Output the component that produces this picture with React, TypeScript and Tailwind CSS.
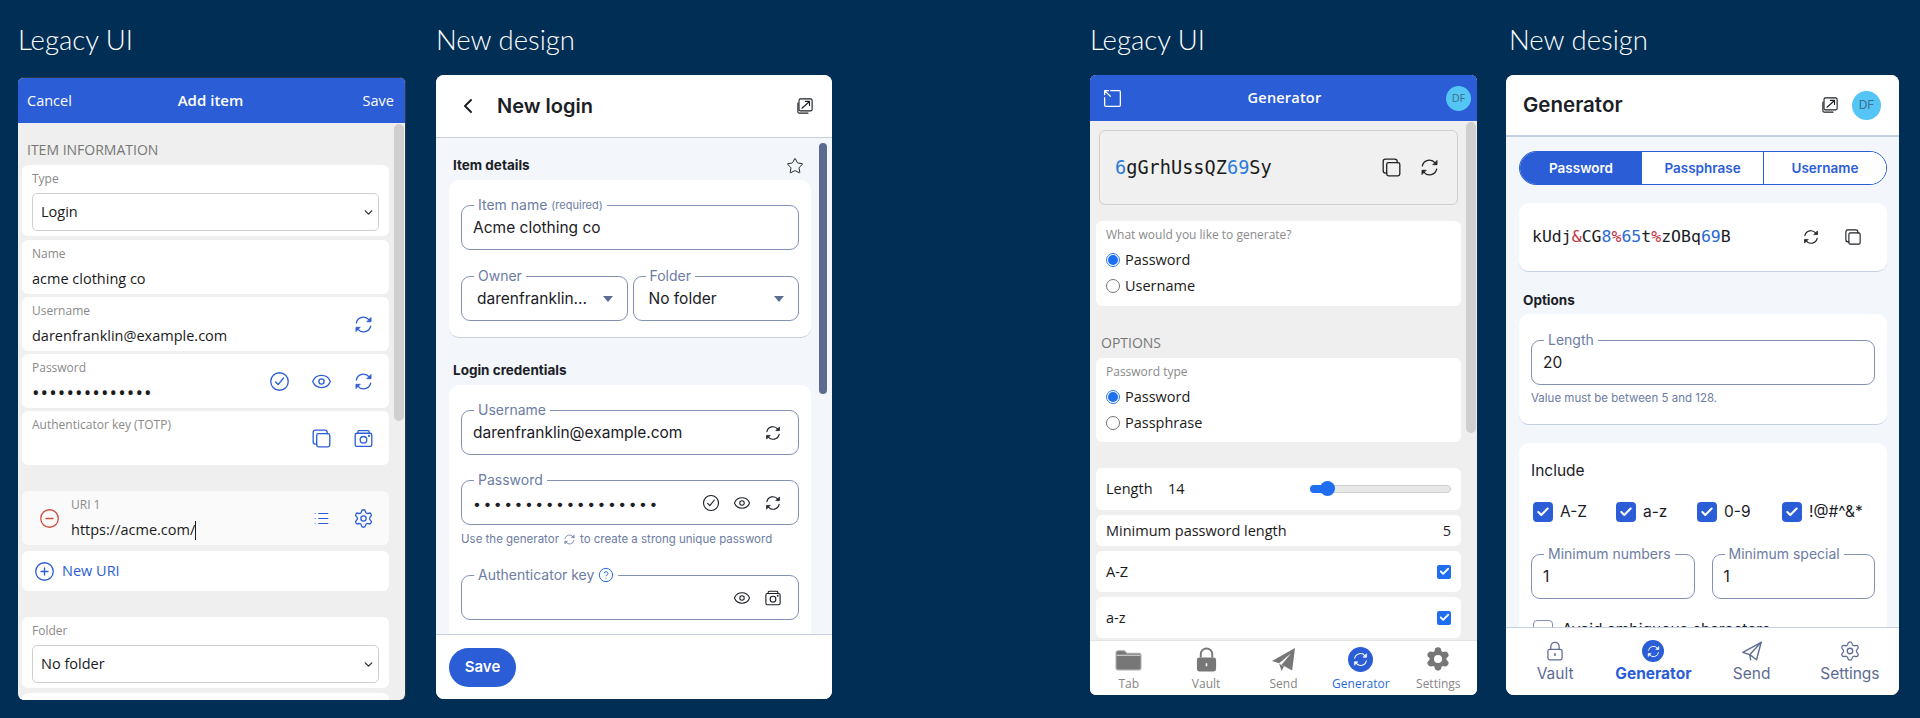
import type { ReactNode } from "react";
import { Check, ChevronDown, ChevronLeft, CircleHelp, CircleMinus, CirclePlus, Eye, List, Settings, Star } from "lucide-react";

const legacyFont = "font-['Open_Sans',sans-serif]";
const newFont = "font-['Inter',sans-serif]";
const monoFont = "font-['DejaVu_Sans_Mono',monospace]";

type IconProps = { className?: string };

function Svg({ className, children }: IconProps & { children: ReactNode }) {
  return (
    <svg viewBox="0 0 24 24" fill="none" stroke="currentColor" strokeWidth="1.5" strokeLinecap="round" strokeLinejoin="round" className={className}>
      {children}
    </svg>
  );
}

function Refresh({ className }: IconProps) {
  return (
    <Svg className={className}>
      <path d="M3.8 10.2A8.3 8.3 0 0 1 18.4 6.8" />
      <path d="M20.2 13.8A8.3 8.3 0 0 1 5.6 17.2" />
      <path d="M20.6 4.4v4.4h-4.4z" fill="currentColor" strokeWidth="1" />
      <path d="M3.4 19.6v-4.4h4.4z" fill="currentColor" strokeWidth="1" />
    </Svg>
  );
}

function Copy({ className }: IconProps) {
  return (
    <Svg className={className}>
      <rect x="6.5" y="6.5" width="15" height="15" rx="2" />
      <path d="M6.5 18.5H5.2a2.7 2.7 0 0 1-2.7-2.7V5a2.5 2.5 0 0 1 2.5-2.5h10.8a2.7 2.7 0 0 1 2.7 2.7v1.3" />
    </Svg>
  );
}

function Camera({ className }: IconProps) {
  return (
    <Svg className={className}>
      <rect x="2.5" y="6" width="19" height="15" rx="2" />
      <path d="M5.5 6V4.5a1.5 1.5 0 0 1 1.5-1.5h10a1.5 1.5 0 0 1 1.5 1.5V6" />
      <circle cx="12" cy="13.5" r="3.8" />
      <circle cx="18.3" cy="9" r=".5" />
    </Svg>
  );
}

function Popout({ className }: IconProps) {
  return (
    <Svg className={className}>
      <rect x="4" y="2.5" width="17.5" height="16" rx="2" />
      <path d="M2.5 8v11.5a2 2 0 0 0 2 2H16" />
      <path d="M8 15 18 6M12.5 5.8H18v5.4" />
    </Svg>
  );
}

function Popin({ className }: IconProps) {
  return (
    <Svg className={className}>
      <path d="M10 3h9.5A1.5 1.5 0 0 1 21 4.5v15a1.5 1.5 0 0 1-1.5 1.5h-15A1.5 1.5 0 0 1 3 19.5V11" />
      <path d="M3 3l6.5 6.5M3 7.5V3h4.5" />
    </Svg>
  );
}

function CheckCircle({ className }: IconProps) {
  return (
    <Svg className={className}>
      <circle cx="12" cy="12" r="10" />
      <path d="m7.5 12.5 3 3 6-7.5" />
    </Svg>
  );
}

function GenBadge({ className }: IconProps) {
  return (
    <span className={`flex items-center justify-center rounded-full bg-[#2a5dd6] text-white ${className}`}>
      <Refresh className="h-[68%] w-[68%]" />
    </span>
  );
}

function LockOutline({ className }: IconProps) {
  return (
    <Svg className={className}>
      <rect x="3.5" y="10" width="17" height="12.5" rx="2" />
      <path d="M7 10V6.5a5 5 0 0 1 10 0V10" />
      <path d="M12 15.5v1.5" strokeWidth="2" />
    </Svg>
  );
}

function PlaneOutline({ className }: IconProps) {
  return (
    <Svg className={className}>
      <path d="M22 2.5 2 13.5l7.5 2.5L17 21.5z" />
      <path d="M22 2.5 9.5 16l1 5.5" />
    </Svg>
  );
}

function FolderFill({ className }: IconProps) {
  return (
    <svg viewBox="0 0 26 24" className={className}>
      <path d="M1 5.5A2 2 0 0 1 3 3.5h6l2.5 2.5H23a2 2 0 0 1 2 2v12a2 2 0 0 1-2 2H3a2 2 0 0 1-2-2z" fill="#777" stroke="#aaa" strokeWidth="1" />
      <path d="M1.5 8h23" stroke="#ddd" strokeWidth="1" />
    </svg>
  );
}

function LockFill({ className }: IconProps) {
  return (
    <svg viewBox="0 0 24 26" className={className}>
      <path d="M6 11V7.5a6 6 0 0 1 12 0V11" fill="none" stroke="#777" strokeWidth="2" />
      <rect x="2" y="11" width="20" height="14.5" rx="2.5" fill="#777" />
      <path d="M12 17v3" stroke="#fff" strokeWidth="1.6" />
    </svg>
  );
}

function PlaneFill({ className }: IconProps) {
  return (
    <svg viewBox="0 0 26 26" className={className}>
      <path d="M25 1 1 14.5l7.5 2.5L21 6.5 11 18.5l11 6z" fill="#777" />
      <path d="M8.5 17.5 11 25l2.5-5z" fill="#777" />
    </svg>
  );
}

function GearFill({ className }: IconProps) {
  return (
    <span className={`relative flex items-center justify-center ${className}`}>
      <Settings className="h-full w-full fill-[#777] text-[#777]" strokeWidth={1.5} />
      <span className="absolute h-[32%] w-[32%] rounded-full bg-white" />
    </span>
  );
}

function Heading({ children, className = "" }: { children: ReactNode; className?: string }) {
  return <h2 className={`flex h-[75px] items-start pt-[22px] font-['Lato',sans-serif] text-[27.5px] font-light leading-[36px] text-white ${className}`}>{children}</h2>;
}

function Thumb({ className }: IconProps) {
  return <div className={`absolute rounded-full ${className}`} />;
}

/* ---------- legacy widgets ---------- */

function LegacyRow({ label, value, children, className = "" }: { label: string; value: ReactNode; children?: ReactNode; className?: string }) {
  return (
    <div className={`flex h-[54px] items-center rounded-[6px] bg-white pl-[10px] pr-[15px] ${className}`}>
      <div className="min-w-0 flex-1 pt-[6px] self-start">
        <div className="text-[12px] leading-4 text-[#8a8a8a]">{label}</div>
        <div className="mt-[7px] text-[14.5px] leading-5 text-[#1a1a1a]">{value}</div>
      </div>
      {children}
    </div>
  );
}

function LegacySelect({ label, value, className = "" }: { label: string; value: string; className?: string }) {
  return (
    <div className={`h-[71px] rounded-[6px] bg-white px-[10px] pt-[6px] ${className}`}>
      <div className="text-[12px] leading-4 text-[#8a8a8a]">{label}</div>
      <div className="mt-[6px] flex h-[38px] items-center justify-between rounded-[5px] border border-[#cfcfcf] pl-[8px] pr-[3px] text-[14.5px] text-[#1a1a1a]">
        {value}
        <ChevronDown className="h-[13px] w-[13px] text-[#333]" strokeWidth={2.5} />
      </div>
    </div>
  );
}

function Radio({ label, checked }: { label: string; checked?: boolean }) {
  return (
    <div className="flex h-[26px] items-center gap-[5px] text-[14.5px] text-[#1a1a1a]">
      {checked ? (
        <span className="flex h-[14px] w-[14px] items-center justify-center rounded-full border border-[#2f7bf0]">
          <span className="h-[10px] w-[10px] rounded-full bg-[#1f6ef0]" />
        </span>
      ) : (
        <span className="h-[14px] w-[14px] rounded-full border border-[#777]" />
      )}
      {label}
    </div>
  );
}

function LegacyCheck({ label }: { label: string }) {
  return (
    <div className="mt-[5px] flex h-[41px] items-center justify-between rounded-[6px] bg-white px-[10px] text-[14.5px] text-[#1a1a1a]">
      {label}
      <span className="flex h-[14px] w-[14px] items-center justify-center rounded-[2px] bg-[#1f6ef0] text-white">
        <Check className="h-[11px] w-[11px]" strokeWidth={4} />
      </span>
    </div>
  );
}

function LegacyTab({ label, icon, active }: { label: string; icon: ReactNode; active?: boolean }) {
  return (
    <div className="flex flex-col items-center">
      <div className="flex h-[26px] items-center justify-center">{icon}</div>
      <div className={`mt-[2px] text-[12px] leading-5 ${active ? "text-[#2a6bd8]" : "text-[#858585]"}`}>{label}</div>
    </div>
  );
}

function AddItemPanel() {
  return (
    <div className={`relative mt-[2px] flex h-[623px] flex-col overflow-hidden rounded-[6px] border-r border-t border-[#2b3a46] bg-[#efefef] ${legacyFont}`}>
      <header className="grid h-[45px] shrink-0 grid-cols-3 items-center bg-[#2b5dd6] pl-[9px] pr-[11px] text-[14.5px] text-white">
        <span>Cancel</span>
        <span className="text-center text-[15px] font-semibold">Add item</span>
        <span className="text-right">Save</span>
      </header>
      <div className="flex min-h-0 flex-1 flex-col overflow-hidden pl-[4px] pr-[16px]">
        <div className="ml-[5px] mt-[17px] text-[14px] leading-5 text-[#777]">ITEM INFORMATION</div>
        <LegacySelect label="Type" value="Login" className="mt-[5px] shrink-0" />
        <LegacyRow label="Name" value="acme clothing co" className="mt-[4px] shrink-0" />
        <LegacyRow label="Username" value="darenfranklin@example.com" className="mt-[3px] shrink-0">
          <Refresh className="h-[21px] w-[21px] text-[#2b5dd6]" />
        </LegacyRow>
        <LegacyRow label="Password" value={<span className="text-[20px] tracking-[1.1px]">••••••••••••••</span>} className="mt-[3px] shrink-0">
          <div className="flex items-center gap-[21px] text-[#2b5dd6]">
            <CheckCircle className="h-[21px] w-[21px]" />
            <Eye className="h-[21px] w-[21px]" strokeWidth={1.5} />
            <Refresh className="h-[21px] w-[21px]" />
          </div>
        </LegacyRow>
        <LegacyRow label="Authenticator key (TOTP)" value="" className="mt-[3px] shrink-0">
          <div className="flex items-center gap-[21px] text-[#2b5dd6]">
            <Copy className="h-[21px] w-[21px]" />
            <Camera className="h-[21px] w-[21px]" />
          </div>
        </LegacyRow>
        <div className="mt-[26px] flex h-[54px] shrink-0 items-center rounded-[6px] bg-[#fafafa] pl-[17px] pr-[15px]">
          <CircleMinus className="h-[21px] w-[21px] text-[#c9503f]" strokeWidth={1.5} />
          <div className="ml-[11px] flex-1 self-start pt-[6px]">
            <div className="text-[12px] leading-4 text-[#8a8a8a]">URI 1</div>
            <div className="mt-[7px] flex items-center text-[14.5px] leading-5 text-[#1a1a1a]">
              https://acme.com/
              <span className="h-[19px] w-px bg-[#1a1a1a]" />
            </div>
          </div>
          <div className="flex items-center gap-[21px] text-[#2b5dd6]">
            <span className="flex h-[21px] w-[21px] items-center justify-center">
              <List className="h-[17px] w-[17px]" strokeWidth={1.5} />
            </span>
            <Settings className="h-[21px] w-[21px]" strokeWidth={1.5} />
          </div>
        </div>
        <div className="mt-[6px] flex h-[40px] shrink-0 items-center gap-[7px] rounded-[6px] bg-white pl-[12px] text-[14.5px] text-[#2b5dd6]">
          <CirclePlus className="h-[21px] w-[21px]" strokeWidth={1.5} />
          New URI
        </div>
        <LegacySelect label="Folder" value="No folder" className="mt-[26px] shrink-0" />
        <div className="mt-[5px] h-[30px] shrink-0 rounded-[6px] bg-white" />
      </div>
      <Thumb className="right-[1px] top-[46px] h-[297px] w-[10px] rounded-[5px] bg-[#cfcfcf]" />
    </div>
  );
}

function GeneratorLegacyPanel() {
  return (
    <div className={`relative flex h-[620px] flex-col overflow-hidden rounded-[6px] bg-[#efefef] ${legacyFont}`}>
      <header className="flex h-[46px] shrink-0 items-center justify-between bg-[#2b5dd6] pl-[12px] pr-[6px] text-white">
        <Popin className="h-[21px] w-[21px]" />
        <span className="text-[14.5px] font-semibold tracking-[0.2px]">Generator</span>
        <span className="flex h-[25px] w-[25px] items-center justify-center rounded-full bg-[#55c5f5] text-[11px] text-[#3f6f8c]">DF</span>
      </header>
      <div className="flex min-h-0 flex-1 flex-col overflow-hidden pl-[6px] pr-[16px]">
        <div className="mx-[3px] mt-[9px] flex h-[75px] shrink-0 items-center rounded-[6px] border border-[#cfcfcf] bg-[#f0f0f0] pl-[15px] pr-[17px]">
          <span className={`flex-1 text-[18.6px] text-[#1a1a1a] ${monoFont}`}>
            <span className="text-[#2a7bd8]">6</span>gGrhUssQZ<span className="text-[#2a7bd8]">69</span>Sy
          </span>
          <div className="flex items-center gap-[17px] text-[#222]">
            <Copy className="h-[21px] w-[21px]" />
            <Refresh className="h-[21px] w-[21px]" />
          </div>
        </div>
        <div className="mt-[16px] h-[85px] shrink-0 rounded-[6px] bg-white px-[10px] pt-[6px]">
          <div className="text-[12px] leading-4 text-[#8a8a8a]">What would you like to generate?</div>
          <div className="mt-[4px]">
            <Radio label="Password" checked />
            <Radio label="Username" />
          </div>
        </div>
        <div className="ml-[5px] mt-[27px] text-[14px] leading-5 text-[#777]">OPTIONS</div>
        <div className="mt-[5px] h-[84px] shrink-0 rounded-[6px] bg-white px-[10px] pt-[6px]">
          <div className="text-[12px] leading-4 text-[#8a8a8a]">Password type</div>
          <div className="mt-[4px]">
            <Radio label="Password" checked />
            <Radio label="Passphrase" />
          </div>
        </div>
        <div className="mt-[26px] flex h-[42px] shrink-0 items-center rounded-[6px] bg-white px-[10px] text-[14.5px] text-[#1a1a1a]">
          <span className="w-[62px]">Length</span>
          <span className="flex-1">14</span>
          <div className="relative h-[8px] w-[141px] rounded-full border border-[#cfcfcf] bg-[#e8e8e8]">
            <div className="absolute -left-px -top-px h-[8px] w-[18px] rounded-full bg-[#1f6ef0]" />
            <div className="absolute left-[9px] top-[-5px] h-[15px] w-[15px] rounded-full bg-[#1f6ef0]" />
          </div>
        </div>
        <div className="mt-[5px] flex h-[31px] shrink-0 items-center justify-between rounded-[6px] bg-white px-[10px] text-[14.5px] text-[#1a1a1a]">
          <span>Minimum password length</span>
          <span>5</span>
        </div>
        <LegacyCheck label="A-Z" />
        <LegacyCheck label="a-z" />
      </div>
      <nav className="grid h-[55px] shrink-0 grid-cols-5 border-t border-[#e4e4e4] bg-white pt-[5px]">
        <LegacyTab label="Tab" icon={<FolderFill className="h-[25px] w-[27px]" />} />
        <LegacyTab label="Vault" icon={<LockFill className="h-[25px] w-[23px]" />} />
        <LegacyTab label="Send" icon={<PlaneFill className="h-[25px] w-[25px]" />} />
        <LegacyTab label="Generator" icon={<GenBadge className="h-[25px] w-[25px]" />} active />
        <LegacyTab label="Settings" icon={<GearFill className="h-[26px] w-[26px]" />} />
      </nav>
      <Thumb className="right-[1px] top-[47px] h-[311px] w-[10px] rounded-[5px] bg-[#cfcfcf]" />
    </div>
  );
}

/* ---------- new design widgets ---------- */

function Field({ label, children, className = "", textClass = "" }: { label: ReactNode; children?: ReactNode; className?: string; textClass?: string }) {
  return (
    <fieldset className={`h-[53px] min-w-0 rounded-[9px] border border-[#8391b5] px-[11px] ${className}`}>
      <legend className="ml-px flex h-4 items-center whitespace-nowrap px-[4px] text-[14px] leading-4 text-[#6d7ca3]">{label}</legend>
      <div className={`flex h-[30px] items-center text-[15.5px] text-[#1b2026] ${textClass}`}>{children}</div>
    </fieldset>
  );
}

function Caret() {
  return <span className="ml-auto mr-[3px] h-0 w-0 shrink-0 border-x-[5px] border-t-[6px] border-x-transparent border-t-[#5d6c92]" />;
}

function Card({ children, className = "" }: { children: ReactNode; className?: string }) {
  return <div className={`shrink-0 rounded-[10px] border-b border-[#c6d0e3] bg-white ${className}`}>{children}</div>;
}

function Box({ label }: { label: string }) {
  return (
    <div className="flex h-[20px] items-center gap-[7px] text-[15.5px] leading-5 text-[#1b2026]">
      <span className="flex h-[20px] w-[20px] shrink-0 items-center justify-center rounded-[4px] bg-[#2a5dd6] text-white">
        <Check className="h-[14px] w-[14px]" strokeWidth={3.5} />
      </span>
      {label}
    </div>
  );
}

function NewTab({ label, children, active }: { label: string; children: ReactNode; active?: boolean }) {
  return (
    <div className="flex flex-col items-center pt-[12px]">
      <div className={`flex h-[22px] items-center ${active ? "text-[#2a5dd6]" : "text-[#5d6c92]"}`}>{children}</div>
      <div className={`mt-[2px] text-[15.5px] leading-5 ${active ? "font-bold text-[#2a5dd6]" : "text-[#5d6c92]"}`}>{label}</div>
    </div>
  );
}

function NewLoginPanel() {
  return (
    <div className={`relative flex h-[624px] flex-col overflow-hidden rounded-[8px] bg-[#f3f6fa] ${newFont}`}>
      <header className="flex h-[63px] shrink-0 items-center border-b border-[#c6d0e3] bg-white pl-[20px] pr-[18px] text-[#1b2026]">
        <ChevronLeft className="h-[24px] w-[24px]" strokeWidth={2} />
        <h1 className="ml-[17px] flex-1 text-[20px] font-semibold">New login</h1>
        <Popout className="h-[18px] w-[18px]" />
      </header>
      <div className="flex min-h-0 flex-1 flex-col overflow-hidden pl-[13px] pr-[21px]">
        <div className="flex h-[42px] shrink-0 items-end justify-between pb-[5px] pl-[4px] pr-[7px]">
          <h3 className="text-[13.5px] font-bold leading-5 text-[#1b2026]">Item details</h3>
          <Star className="h-[18px] w-[18px] text-[#1b2026]" strokeWidth={1.3} />
        </div>
        <Card className="h-[158px] px-[12px] pt-[17px]">
          <Field label={<>Item name <span className="ml-1 text-[11px]">(required)</span></>}>Acme clothing co</Field>
          <div className="mt-[18px] grid grid-cols-2 gap-[5px]">
            <Field label="Owner" textClass="pl-[4px]">
              <span className="truncate">darenfranklin...</span>
              <Caret />
            </Field>
            <Field label="Folder" textClass="pl-[4px]">
              No folder
              <Caret />
            </Field>
          </div>
        </Card>
        <h3 className="ml-[4px] mt-[22px] text-[13.5px] font-bold leading-5 text-[#1b2026]">Login credentials</h3>
        <Card className="mt-[5px] h-[260px] px-[12px] pt-[17px]">
          <Field label="Username">
            darenfranklin@example.com
            <Refresh className="ml-auto mr-[5px] h-[18px] w-[18px]" />
          </Field>
          <Field label="Password" className="mt-[17px]">
            <span className="text-[14px] tracking-[2.5px]">••••••••••••••••••</span>
            <div className="ml-auto mr-[5px] flex items-center gap-[13px]">
              <CheckCircle className="h-[18px] w-[18px]" />
              <Eye className="h-[18px] w-[18px]" strokeWidth={1.4} />
              <Refresh className="h-[18px] w-[18px]" />
            </div>
          </Field>
          <div className="mt-[6px] flex h-4 items-center text-[11.5px] leading-4 text-[#6d7ca3]">
            Use the generator
            <Refresh className="mx-[4px] h-[13px] w-[13px]" />
            to create a strong unique password
          </div>
          <Field
            className="mt-[20px]"
            label={
              <>
                Authenticator key
                <CircleHelp className="ml-[4px] h-[16px] w-[16px] text-[#2a6bd8]" strokeWidth={1.5} />
              </>
            }
          >
            <div className="ml-auto mr-[5px] flex items-center gap-[13px]">
              <Eye className="h-[18px] w-[18px]" strokeWidth={1.4} />
              <Camera className="h-[18px] w-[18px]" />
            </div>
          </Field>
        </Card>
      </div>
      <footer className="flex h-[65px] shrink-0 items-center border-t border-[#c6d0e3] bg-white pl-[13px]">
        <button className="h-[39px] w-[67px] rounded-full bg-[#2a5dd6] text-[15px] font-semibold text-white">Save</button>
      </footer>
      <Thumb className="right-[5px] top-[68px] h-[251px] w-[8px] rounded-[4px] bg-[#5b6b8f]" />
    </div>
  );
}

function GeneratorNewPanel() {
  return (
    <div className={`flex h-[620px] flex-col overflow-hidden rounded-[8px] bg-[#f3f6fa] ${newFont}`}>
      <header className="flex h-[62px] shrink-0 items-center border-b-2 border-[#c6d0e3] bg-white pl-[17px] pr-[18px] text-[#1b2026]">
        <h1 className="flex-1 text-[20.5px] font-semibold">Generator</h1>
        <Popout className="h-[18px] w-[18px]" />
        <span className="ml-[13px] flex h-[29px] w-[29px] items-center justify-center rounded-full bg-[#55c5f5] text-[12px] text-[#3f6f8c]">DF</span>
      </header>
      <div className="flex min-h-0 flex-1 flex-col overflow-hidden pl-[13px] pr-[12px]">
        <div className="mt-[14px] grid h-[34px] shrink-0 grid-cols-3 overflow-hidden rounded-full border border-[#2a5dd6] text-[13.5px] font-semibold text-[#2a5dd6]">
          <div className="flex items-center justify-center bg-[#2a5dd6] text-white">Password</div>
          <div className="flex items-center justify-center border-r border-[#2a5dd6] bg-white">Passphrase</div>
          <div className="flex items-center justify-center bg-white">Username</div>
        </div>
        <Card className="mt-[18px] flex h-[69px] items-center pl-[13px] pr-[25px]">
          <span className={`flex-1 text-[16.5px] text-[#1b2026] ${monoFont}`}>
            kUdj<span className="text-[#c5323f]">&amp;</span>CG<span className="text-[#2a6bd8]">8</span>
            <span className="text-[#c5323f]">%</span>
            <span className="text-[#2a6bd8]">65</span>t<span className="text-[#c5323f]">%</span>zOBq
            <span className="text-[#2a6bd8]">69</span>B
          </span>
          <div className="flex items-center gap-[24px] text-[#1b2026]">
            <Refresh className="h-[18px] w-[18px]" />
            <Copy className="h-[18px] w-[18px]" />
          </div>
        </Card>
        <h3 className="ml-[4px] mt-[18px] text-[13.5px] font-bold leading-5 text-[#1b2026]">Options</h3>
        <Card className="mt-[4px] h-[111px] px-[12px] pt-[18px]">
          <Field label="Length">20</Field>
          <div className="mt-[5px] text-[11.5px] leading-4 text-[#6d7ca3]">Value must be between 5 and 128.</div>
        </Card>
        <div className="mt-[18px] shrink-0 rounded-t-[10px] bg-white px-[12px] pb-[10px] pt-[16px]">
          <div className="text-[15.5px] leading-6 text-[#1b2026]">Include</div>
          <div className="mt-[19px] flex h-[20px] pl-[2px]">
            <div className="w-[83px]"><Box label="A-Z" /></div>
            <div className="w-[81px]"><Box label="a-z" /></div>
            <div className="w-[85px]"><Box label="0-9" /></div>
            <Box label="!@#^&*" />
          </div>
          <div className="mt-[24px] grid grid-cols-2 gap-[17px]">
            <Field label="Minimum numbers">1</Field>
            <Field label="Minimum special">1</Field>
          </div>
          <div className="ml-[2px] mt-[21px] flex items-start gap-[9px] text-[15.5px] leading-5 text-[#1b2026]">
            <span className="h-[20px] w-[20px] rounded-[4px] border border-[#8391b5]" />
            Avoid ambiguous characters
          </div>
        </div>
      </div>
      <nav className="grid h-[68px] shrink-0 grid-cols-4 border-t border-[#c6d0e3] bg-white">
        <NewTab label="Vault"><LockOutline className="h-[22px] w-[20px]" /></NewTab>
        <NewTab label="Generator" active><GenBadge className="h-[22px] w-[22px]" /></NewTab>
        <NewTab label="Send"><PlaneOutline className="h-[22px] w-[22px]" /></NewTab>
        <NewTab label="Settings"><Settings className="h-[22px] w-[22px]" strokeWidth={1.4} /></NewTab>
      </nav>
    </div>
  );
}

export default function App() {
  return (
    <div className="flex h-[718px] w-[1920px] items-start overflow-hidden bg-[#012e55] pl-[18px]">
      <section className="w-[388px]">
        <Heading>Legacy UI</Heading>
        <AddItemPanel />
      </section>
      <section className="ml-[30px] w-[396px]">
        <Heading>New design</Heading>
        <NewLoginPanel />
      </section>
      <section className="ml-[258px] w-[387px]">
        <Heading>Legacy UI</Heading>
        <GeneratorLegacyPanel />
      </section>
      <section className="ml-[29px] w-[393px]">
        <Heading className="pl-[3px]">New design</Heading>
        <GeneratorNewPanel />
      </section>
    </div>
  );
}
